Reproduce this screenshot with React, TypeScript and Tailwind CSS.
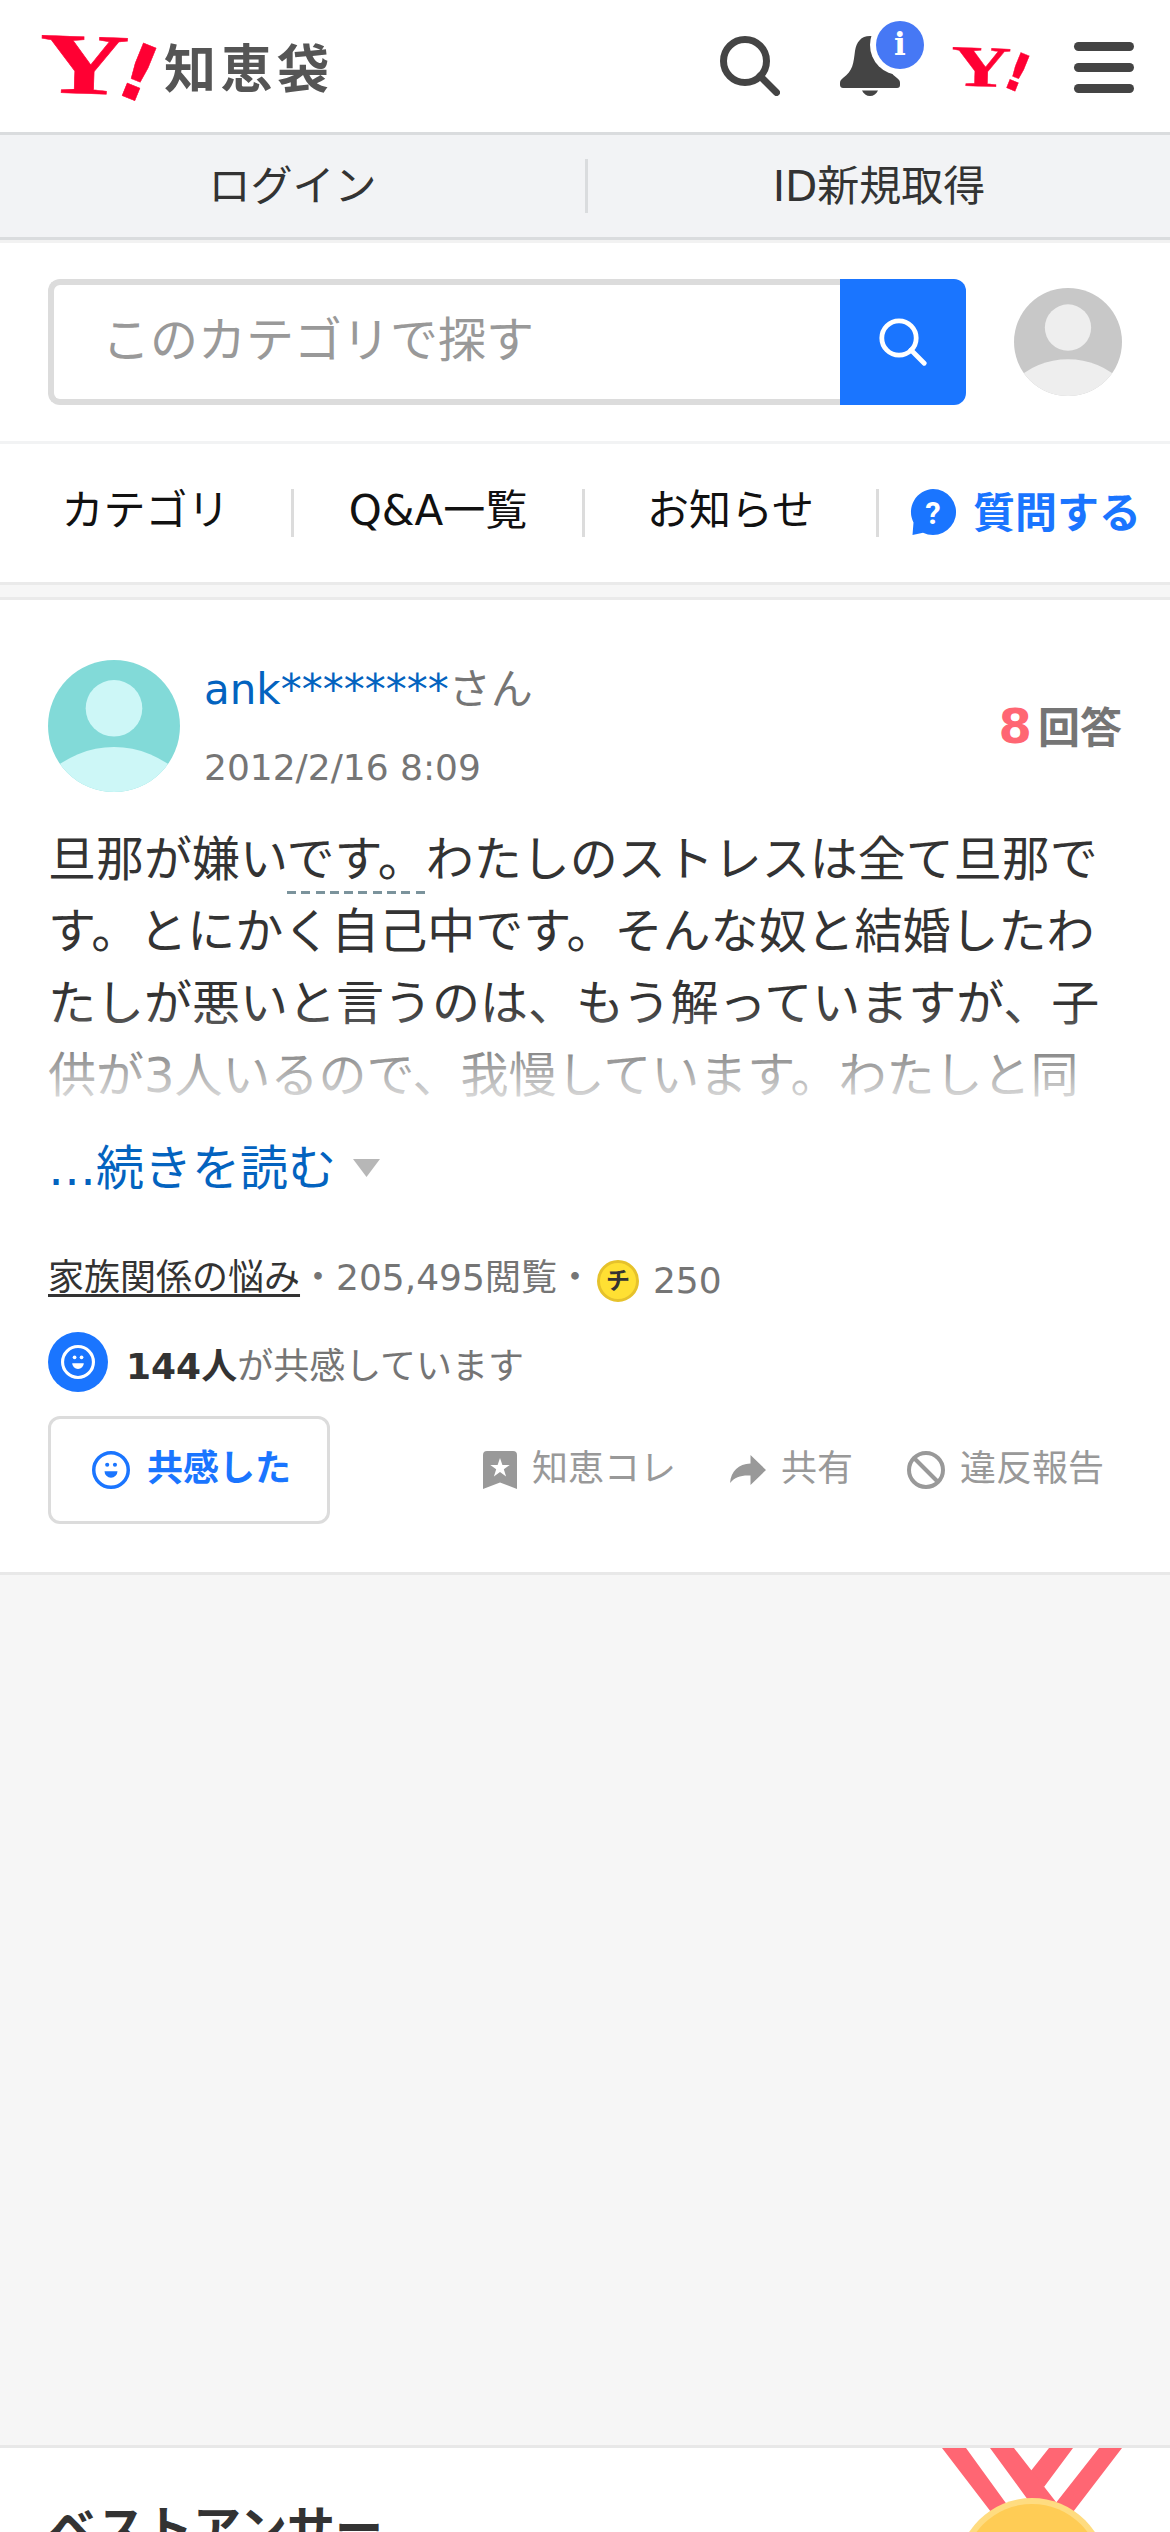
import type { ReactNode } from "react"

const NAV_ITEMS = [
  { label: "カテゴリ", width: "w-[291px]" },
  { label: "Q&A一覧", width: "w-[288px]" },
  { label: "お知らせ", width: "w-[291px]" },
]

function YahooMark({ className }: { className?: string }) {
  return (
    <svg viewBox="0 0 118 64" className={className} fill="#ff0033" stroke="#ff0033" overflow="visible" aria-hidden="true">
      <text
        transform="translate(-1 60) rotate(2) scale(1.43 1)"
        fontFamily="'Liberation Serif', serif"
        fontWeight="700"
        fontSize="87"
        strokeWidth="0.500"
      >
        Y
      </text>
      <text
        transform="translate(73 59.500) rotate(22)"
        fontFamily="'DejaVu Sans', sans-serif"
        fontWeight="700"
        fontSize="78"
        strokeWidth="0.500"
      >
        !
      </text>
    </svg>
  )
}

function SearchIcon({ className, strokeWidth }: { className?: string; strokeWidth: number }) {
  return (
    <svg viewBox="0 0 60 60" className={className} fill="none" stroke="currentColor" strokeWidth={strokeWidth} aria-hidden="true">
      <circle cx="25" cy="25" r="21.5" />
      <path d="M40 40 56.5 56.5" strokeLinecap="round" />
    </svg>
  )
}

function BellIcon() {
  return (
    <svg viewBox="0 0 84 78" className="h-[78px] w-[84px]" aria-hidden="true">
      <path
        fill="#444"
        d="M30 18c-9 0-13.500 6-15 15-1.500 12-2 20-12 27-2 1.500-3 3-3 5v2c0 2 1.500 3 3 3h54c2 0 3-1 3-3v-2c0-2-1-3.500-3-5-10-7-10.500-15-12-27-1.500-9-6-15-15-15Z"
      />
      <path fill="#444" d="M22 72.500h16c-1.500 3.500-4.500 5.500-8 5.500s-6.500-2-8-5.500Z" />
      <circle cx="60" cy="27" r="30" fill="#fff" />
      <circle cx="60" cy="27" r="24" fill="#4678f5" />
      <text x="60" y="37" textAnchor="middle" fill="#fff" fontFamily="'DejaVu Serif', serif" fontWeight="700" fontSize="31">
        i
      </text>
    </svg>
  )
}

function Avatar({ className, background, figure }: { className: string; background: string; figure: string }) {
  return (
    <svg viewBox="0 0 132 132" className={className} aria-hidden="true">
      <rect width="132" height="132" fill={background} />
      <circle cx="66" cy="48.3" r="28.3" fill={figure} />
      <circle cx="66" cy="181" r="94" fill={figure} />
    </svg>
  )
}

function SmileIcon({ className }: { className?: string }) {
  return (
    <svg viewBox="0 0 24 24" className={className} fill="currentColor" aria-hidden="true">
      <circle cx="12" cy="12" r="10.900" fill="none" stroke="currentColor" strokeWidth="2.200" />
      <circle cx="9.600" cy="8.700" r="1.300" />
      <circle cx="14.500" cy="8.700" r="1.300" />
      <path d="M7.900 12.800h8.200a4.100 4.100 0 0 1-8.200 0Z" />
    </svg>
  )
}

function QuestionIcon() {
  return (
    <svg viewBox="0 0 48 48" className="size-[48px] shrink-0" aria-hidden="true">
      <path fill="#1a75ff" d="M24 0a23 23 0 1 1-10 43.700L3.500 46l1-12.500A23 23 0 0 1 24 0Z" />
      <text x="24" y="34.500" textAnchor="middle" fill="#fff" fontFamily="Roboto, sans-serif" fontWeight="700" fontSize="31">
        ?
      </text>
    </svg>
  )
}

function BookmarkIcon() {
  return (
    <svg viewBox="0 0 34 38" className="h-[38px] w-[34px]" aria-hidden="true">
      <path fill="#999" d="M4 0h26a4 4 0 0 1 4 4v34l-17-6.500L0 38V4a4 4 0 0 1 4-4Z" />
      <path fill="#fff" d="m17 7 2.400 7h7.300l-5.900 4.300 2.300 7.100-6.100-4.400-6.100 4.400 2.300-7.100L7.300 14h7.300Z" />
    </svg>
  )
}

function ShareIcon() {
  return (
    <svg viewBox="0 0 36 30" className="h-[30px] w-[36px]" aria-hidden="true">
      <path fill="#999" d="M20.500 0 36 15 20.500 30v-9.500C11 20 5 22 0 28 1 16 8.500 9 20.500 8.500Z" />
    </svg>
  )
}

function ProhibitedIcon() {
  return (
    <svg viewBox="0 0 38 38" className="size-[38px]" fill="none" stroke="#999" strokeWidth="4" aria-hidden="true">
      <circle cx="19" cy="19" r="17" />
      <path d="m7 7 24 24" />
    </svg>
  )
}

function CoinIcon() {
  return (
    <svg viewBox="0 0 42 42" className="size-[42px]" aria-hidden="true">
      <circle cx="21" cy="21" r="19.500" fill="#ffe033" stroke="#e6c22b" strokeWidth="3" />
      <text x="21" y="29" textAnchor="middle" fill="#333" fontFamily="'Noto Sans CJK JP', sans-serif" fontWeight="700" fontSize="24">
        チ
      </text>
    </svg>
  )
}

function MedalIcon() {
  return (
    <svg viewBox="0 0 180 84" className="h-[84px] w-[180px]" aria-hidden="true">
      <path fill="#ff6673" d="M107 0h24L102 39 88 24ZM157 0h23l-49 64-18-8Z" />
      <path fill="#ff6673" d="M0 0h24l42 58-17 6ZM48 0h24l42 54-28-2Z" />
      <circle cx="90" cy="125" r="75" fill="#ffdc80" />
      <circle cx="90" cy="125" r="69" fill="#ffcc55" />
    </svg>
  )
}

function Action({ icon, label }: { icon: ReactNode; label: string }) {
  return (
    <div className="flex items-center">
      {icon}
      <span className="ml-[15px] -translate-y-px leading-[54px]">{label}</span>
    </div>
  )
}

function SiteHeader() {
  return (
    <header>
      <div className="flex h-[135px] justify-between border-b-[3px] border-[#dadcde] pr-[36px] pl-[39px]">
        <div className="flex items-start">
          <YahooMark className="mt-[32px] h-[64px] w-[118px]" />
          <span className="mt-[31px] ml-[7px] text-[52px] leading-[78px] font-bold tracking-[4.500px] text-[#555]">知恵袋</span>
        </div>
        <div className="flex items-start text-[#444]">
          <SearchIcon className="mt-[36px] size-[60px]" strokeWidth={7} />
          <div className="mt-[18px] ml-[60px]">
            <BellIcon />
          </div>
          <YahooMark className="mt-[45px] ml-[27px] h-[43px] w-[79px]" />
          <div className="mt-[42px] ml-[44px] flex flex-col gap-3">
            <span className="h-[9px] w-[60px] rounded-full bg-[#444]" />
            <span className="h-[9px] w-[60px] rounded-full bg-[#444]" />
            <span className="h-[9px] w-[60px] rounded-full bg-[#444]" />
          </div>
        </div>
      </div>
      <div className="flex h-[105px] items-center border-b-[3px] border-[#dadcde] bg-[#f2f3f5] text-center text-[42px]">
        <span className="w-[585px]">ログイン</span>
        <span className="h-[54px] w-[3px] bg-[#dadcde]" />
        <span className="flex-1">ID新規取得</span>
      </div>
      <div className="h-[3px] bg-[#f2f2f2]" />
    </header>
  )
}

function SearchBar() {
  return (
    <div className="flex h-[201px] items-center border-b-[3px] border-[#f2f3f4] px-[48px]">
      <div className="flex h-[126px] w-[792px] items-center rounded-l-[12px] border-[6px] border-r-0 border-[#dcdcdc] pl-[48px]">
        <span className="-translate-y-[2px] text-[48px] leading-[72px] text-[#999]">このカテゴリで探す</span>
      </div>
      <button className="flex h-[126px] w-[126px] items-center justify-center rounded-r-[12px] bg-[#1a75ff] text-white">
        <SearchIcon className="size-[48px]" strokeWidth={6} />
      </button>
      <Avatar className="ml-auto size-[108px] rounded-full" background="#c8c8c8" figure="#eeeeee" />
    </div>
  )
}

function Nav() {
  return (
    <nav className="flex h-[141px] items-center border-b-[3px] border-[#eaeaea] text-[42px] leading-[60px] text-[#111]">
      {NAV_ITEMS.map((item) => (
        <div key={item.label} className="flex items-center">
          <span className={`${item.width} -translate-y-[2px] text-center`}>{item.label}</span>
          <span className="h-[48px] w-[3px] bg-[#dcdcdc]" />
        </div>
      ))}
      <div className="flex items-center pl-[30px]">
        <QuestionIcon />
        <span className="ml-[16px] translate-y-px font-bold text-[#1a75ff]">質問する</span>
      </div>
    </nav>
  )
}

function QuestionCard() {
  return (
    <article className="h-[975px] border-b-[3px] border-[#e8e8e8] px-[48px] pt-[60px]">
      <div className="flex">
        <Avatar className="size-[132px] rounded-full" background="#82dad8" figure="#cdf7f7" />
        <div className="ml-6 text-[#757575]">
          <p className="text-[42px] leading-[60px]">
            <a className="text-[#0363bf]">ank********</a>さん
          </p>
          <p className="mt-[21px] text-[36px] leading-[54px]">2012/2/16 8:09</p>
        </div>
        <p className="mt-[30px] ml-auto text-[42px] leading-[72px] font-bold text-[#757575]">
          <span className="mr-[6px] text-[48px] text-[#ff6673]">8</span>回答
        </p>
      </div>

      <div className="relative mt-[28px] text-[48px] leading-[72px] whitespace-nowrap">
        旦那が嫌い
        <span className="bg-[repeating-linear-gradient(90deg,#7b939c_0,#7b939c_9px,transparent_9px,transparent_14.3px)] bg-[length:138px_3px] bg-[position:0_100%] bg-no-repeat pb-[7px]">
          です。
        </span>
        わたしのストレスは全て旦那で
        <br />
        す。とにかく自己中です。そんな奴と結婚したわ
        <br />
        たしが悪いと言うのは、もう解っていますが、子
        <br />
        供が3人いるので、我慢しています。わたしと同
        <div className="absolute inset-x-0 bottom-0 h-[108px] bg-linear-to-b from-white/0 to-white/93" />
      </div>
      <div className="mt-[21px] flex items-center text-[48px] leading-[72px] text-[#0363bf]">
        …続きを読む
        <svg viewBox="0 0 27 18" className="ml-[17px] h-[18px] w-[27px]" aria-hidden="true">
          <path fill="#b7b7b7" d="M0 0h27L13.500 18Z" />
        </svg>
      </div>

      <div className="mt-[44px] flex items-center text-[36px] leading-[54px] text-[#757575]">
        <a className="text-[#333] underline decoration-[3px] underline-offset-[4px]">家族関係の悩み</a>
        <span>・205,495閲覧・</span>
        <span className="mt-[6px] ml-1">
          <CoinIcon />
        </span>
        <span className="mt-[6px] ml-[14px]">250</span>
      </div>

      <div className="mt-[24px] flex h-[60px] items-center text-[36px] leading-[54px] text-[#757575]">
        <span className="mr-[18px] flex size-[60px] items-center justify-center rounded-full bg-[#1a75ff] text-white">
          <SmileIcon className="size-[34px]" />
        </span>
        <span className="mt-[10px]">
          <b className="text-[#333]">144人</b>が共感しています
        </span>
      </div>

      <div className="mt-[24px] flex items-center justify-between text-[36px] text-[#999]">
        <button className="flex h-[108px] w-[282px] items-center rounded-[12px] border-[3px] border-[#dcdcdc] pl-[41px] font-bold text-[#1a75ff]">
          <SmileIcon className="size-[38px]" />
          <span className="ml-[17px] -translate-y-px">共感した</span>
        </button>
        <div className="flex items-center gap-[54px] pr-[18px]">
          <Action icon={<BookmarkIcon />} label="知恵コレ" />
          <Action icon={<ShareIcon />} label="共有" />
          <Action icon={<ProhibitedIcon />} label="違反報告" />
        </div>
      </div>
    </article>
  )
}

export default function App() {
  return (
    <div className="h-[2532px] w-[1170px] overflow-hidden bg-white font-['DejaVu_Sans','Noto_Sans_CJK_JP',sans-serif] text-[#333]" lang="ja">
      <SiteHeader />
      <SearchBar />
      <Nav />
      <div className="h-[15px] border-b-[3px] border-[#eaeaea] bg-[#f6f6f6]" />
      <QuestionCard />
      <div className="h-[873px] border-b-[3px] border-[#e8e8e8] bg-[#f6f6f6]" />
      <section className="flex h-[84px] items-start justify-between overflow-hidden px-[48px]">
        <h2 className="pt-[45px] text-[48px] leading-[72px] font-bold">ベストアンサー</h2>
        <MedalIcon />
      </section>
    </div>
  )
}
